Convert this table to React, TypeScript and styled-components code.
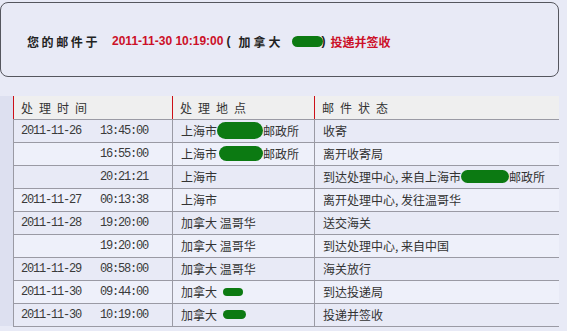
import styled, { createGlobalStyle } from "styled-components";

const GlobalStyle = createGlobalStyle`
  html, body {
    margin: 0;
    padding: 0;
    background: #e8eaf6;
  }
  body {
    font-family: "Noto Sans CJK SC", "Liberation Sans", sans-serif;
    font-size: 12px;
    color: #333;
  }
`;

const Page = styled.div`
  width: 567px;
  height: 331px;
  overflow: hidden;
  padding-top: 2px;
  box-sizing: border-box;
`;

const SummaryBox = styled.div`
  width: 559px;
  height: 75px;
  box-sizing: border-box;
  border: 1px solid #55565e;
  border-radius: 8px;
  display: flex;
  align-items: center;
  padding-left: 26px;
  padding-top: 3px;
  font-weight: bold;
  color: #222;
`;

const Lead = styled.span`
  letter-spacing: 2.6px;
  margin-right: 12px;
`;

const RedDate = styled.span`
  font-family: "Liberation Sans", sans-serif;
  font-size: 12px;
  color: #cc1028;
`;

const Paren = styled.span`
  font-family: "Liberation Sans", sans-serif;
  margin: 0 8px 0 3px;
`;

const Place = styled.span`
  letter-spacing: 3px;
`;

const RedStatus = styled.span`
  color: #cc1028;
  margin-left: 5px;
`;

const TableArea = styled.div`
  margin-top: 19px;
  display: flex;
  height: 230px;
`;

const Strip = styled.div`
  width: 13px;
  background: #dde0f0;
`;

const Track = styled.table`
  width: 545px;
  border-collapse: collapse;
  table-layout: fixed;
  align-self: flex-start;
`;

const HeadCell = styled.th<{ $w: number }>`
  width: ${({ $w }) => $w}px;
  height: 23px;
  padding: 0 0 0 7px;
  background: #efefef;
  border-left: 1px solid #cc1018;
  border-bottom: 1px solid #9a9aa4;
  text-align: left;
  font-weight: normal;
  letter-spacing: 6px;
  color: #333;
  box-sizing: border-box;
`;

const Row = styled.tr<{ $odd: boolean }>`
  background: ${({ $odd }) => ($odd ? "#e8eaf6" : "#eef0fa")};
`;

const Cell = styled.td`
  height: 23px;
  padding: 0 0 0 8px;
  border-left: 1px solid #9a9aa4;
  border-bottom: 1px solid #9a9aa4;
  white-space: nowrap;
  overflow: hidden;
  color: #333;
  box-sizing: border-box;
`;

const TimeWrap = styled.div`
  display: grid;
  grid-template-columns: 79px auto;
  padding-left: 0;
  margin-left: -1px;
  font-family: "Liberation Mono", monospace;
  font-size: 12px;
  letter-spacing: -1.2px;
  color: #3a3a3a;
`;

const Inline = styled.span`
  display: inline-flex;
  align-items: center;
`;

const Blob = ({ w, h, gap = 0 }: { w: number; h: number; gap?: number }) => (
  <svg
    width={w}
    height={h}
    viewBox={`0 0 ${w} ${h}`}
    style={{ display: "block", marginLeft: gap }}
  >
    <rect x={0} y={0} width={w} height={h} rx={h / 2} fill="#0c7a12" />
  </svg>
);

interface Entry {
  date: string;
  time: string;
  place: React.ReactNode;
  status: React.ReactNode;
}

const rows: Entry[] = [
  {
    date: "2011-11-26",
    time: "13:45:00",
    place: (
      <Inline>
        上海市
        <Blob w={46} h={17} />
        邮政所
      </Inline>
    ),
    status: "收寄",
  },
  {
    date: "",
    time: "16:55:00",
    place: (
      <Inline>
        上海市
        <Blob w={44} h={15} gap={2} />
        邮政所
      </Inline>
    ),
    status: "离开收寄局",
  },
  {
    date: "",
    time: "20:21:21",
    place: "上海市",
    status: (
      <Inline>
        到达处理中心, 来自上海市
        <Blob w={48} h={13} />
        邮政所
      </Inline>
    ),
  },
  { date: "2011-11-27", time: "00:13:38", place: "上海市", status: "离开处理中心, 发往温哥华" },
  { date: "2011-11-28", time: "19:20:00", place: "加拿大 温哥华", status: "送交海关" },
  { date: "", time: "19:20:00", place: "加拿大 温哥华", status: "到达处理中心, 来自中国" },
  { date: "2011-11-29", time: "08:58:00", place: "加拿大 温哥华", status: "海关放行" },
  {
    date: "2011-11-30",
    time: "09:44:00",
    place: (
      <Inline>
        加拿大
        <Blob w={20} h={8} gap={6} />
      </Inline>
    ),
    status: "到达投递局",
  },
  {
    date: "2011-11-30",
    time: "10:19:00",
    place: (
      <Inline>
        加拿大
        <Blob w={23} h={9} gap={6} />
      </Inline>
    ),
    status: "投递并签收",
  },
];

const App = () => {
  return (
    <Page>
      <GlobalStyle />
      <SummaryBox>
        <Lead>您的邮件于</Lead>
        <RedDate>2011-11-30 10:19:00</RedDate>
        <Paren>(</Paren>
        <Place>加拿大</Place>
        <Inline style={{ marginLeft: 9 }}>
          <Blob w={31} h={11} />
          <span style={{ marginLeft: -2, fontFamily: "Liberation Sans" }}>)</span>
        </Inline>
        <RedStatus>投递并签收</RedStatus>
      </SummaryBox>

      <TableArea>
        <Strip />
        <Track>
          <thead>
            <tr>
              <HeadCell $w={159}>处理时间</HeadCell>
              <HeadCell $w={142}>处理地点</HeadCell>
              <HeadCell $w={244}>邮件状态</HeadCell>
            </tr>
          </thead>
          <tbody>
            {rows.map((r, i) => (
              <Row key={i} $odd={i % 2 === 0}>
                <Cell>
                  <TimeWrap>
                    <span>{r.date}</span>
                    <span>{r.time}</span>
                  </TimeWrap>
                </Cell>
                <Cell>{r.place}</Cell>
                <Cell>{r.status}</Cell>
              </Row>
            ))}
          </tbody>
        </Track>
      </TableArea>
    </Page>
  );
};

export default App;
